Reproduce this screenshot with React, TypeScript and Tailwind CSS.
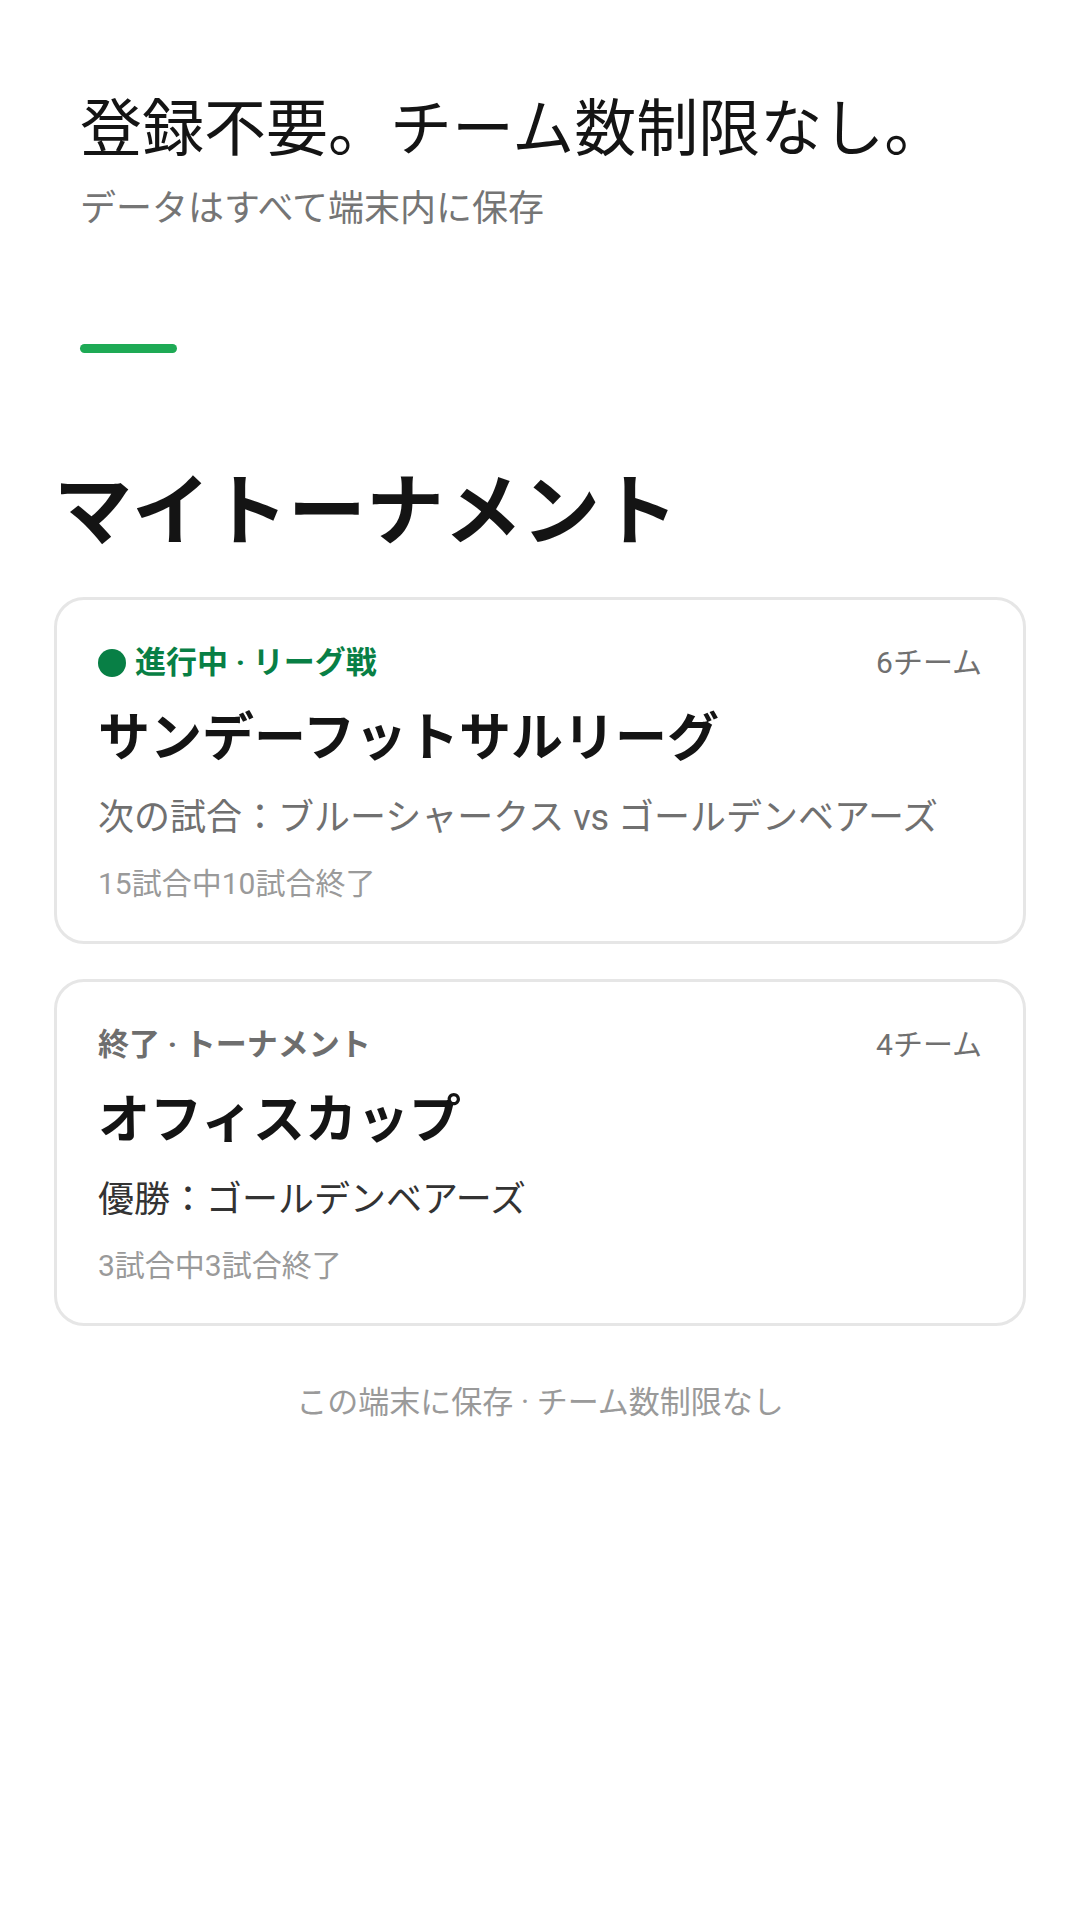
import React from "react";

const FONT = { fontFamily: "Roboto, 'Noto Sans CJK JP', 'Noto Sans', sans-serif" };

type Card = {
  live: boolean;
  status: string;
  teams: string;
  title: string;
  detail: string;
  detailDark: boolean;
  progress: string;
};

const cards: Card[] = [
  {
    live: true,
    status: "進行中 · リーグ戦",
    teams: "6チーム",
    title: "サンデーフットサルリーグ",
    detail: "次の試合：ブルーシャークス vs ゴールデンベアーズ",
    detailDark: false,
    progress: "15試合中10試合終了",
  },
  {
    live: false,
    status: "終了 · トーナメント",
    teams: "4チーム",
    title: "オフィスカップ",
    detail: "優勝：ゴールデンベアーズ",
    detailDark: true,
    progress: "3試合中3試合終了",
  },
];

function TournamentCard({ c }: { c: Card }) {
  return (
    <div className="rounded-[30px] border-[3px] border-[#e6e6e6] bg-white px-[41px] pt-[40px] pb-[35px]">
      <div className="flex h-[45px] items-center justify-between">
        <div className="flex items-center">
          {c.live && <span className="mr-[9px] h-[28px] w-[28px] rounded-full bg-[#087f45]" />}
          <span
            className={
              c.live
                ? "text-[31px] font-bold leading-[45px] text-[#087f45]"
                : "text-[31px] font-bold leading-[45px] text-[#6e6e6e]"
            }
          >
            {c.status}
          </span>
        </div>
        <span className="text-[30px] leading-[45px] text-[#707070]">{c.teams}</span>
      </div>
      <div className="mt-[16px] text-[52px] font-bold leading-[76px] text-[#141414]">{c.title}</div>
      <div
        className={
          c.detailDark
            ? "mt-[14px] text-[36px] leading-[54px] text-[#333333]"
            : "mt-[14px] text-[36px] leading-[54px] text-[#707070]"
        }
      >
        {c.detail}
      </div>
      <div className="mt-[16px] text-[30px] leading-[45px] text-[#9a9a9a]">{c.progress}</div>
    </div>
  );
}

export default function App() {
  return (
    <div className="min-h-[1920px] w-full bg-white" style={FONT}>
      <div className="px-[54px] pt-[91px]">
        <div className="pl-[26px]">
          <h1 className="text-[62px] font-normal leading-[78px] text-[#141414]">登録不要。チーム数制限なし。</h1>
          <p className="mt-[13px] text-[36px] leading-[54px] text-[#757575]">データはすべて端末内に保存</p>
          <div className="mt-[108px] h-[9px] w-[97px] rounded-full bg-[#1eaa55]" />
        </div>
        <h2 className="mt-[110px] text-[78px] font-bold leading-[100px] text-[#141414]">マイトーナメント</h2>
        <div className="mt-[34px] flex flex-col gap-[35px]">
          {cards.map((c) => (
            <TournamentCard key={c.title} c={c} />
          ))}
        </div>
        <p className="mt-[54px] text-center text-[31px] leading-[46px] text-[#9a9a9a]">
          この端末に保存 · チーム数制限なし
        </p>
      </div>
    </div>
  );
}
